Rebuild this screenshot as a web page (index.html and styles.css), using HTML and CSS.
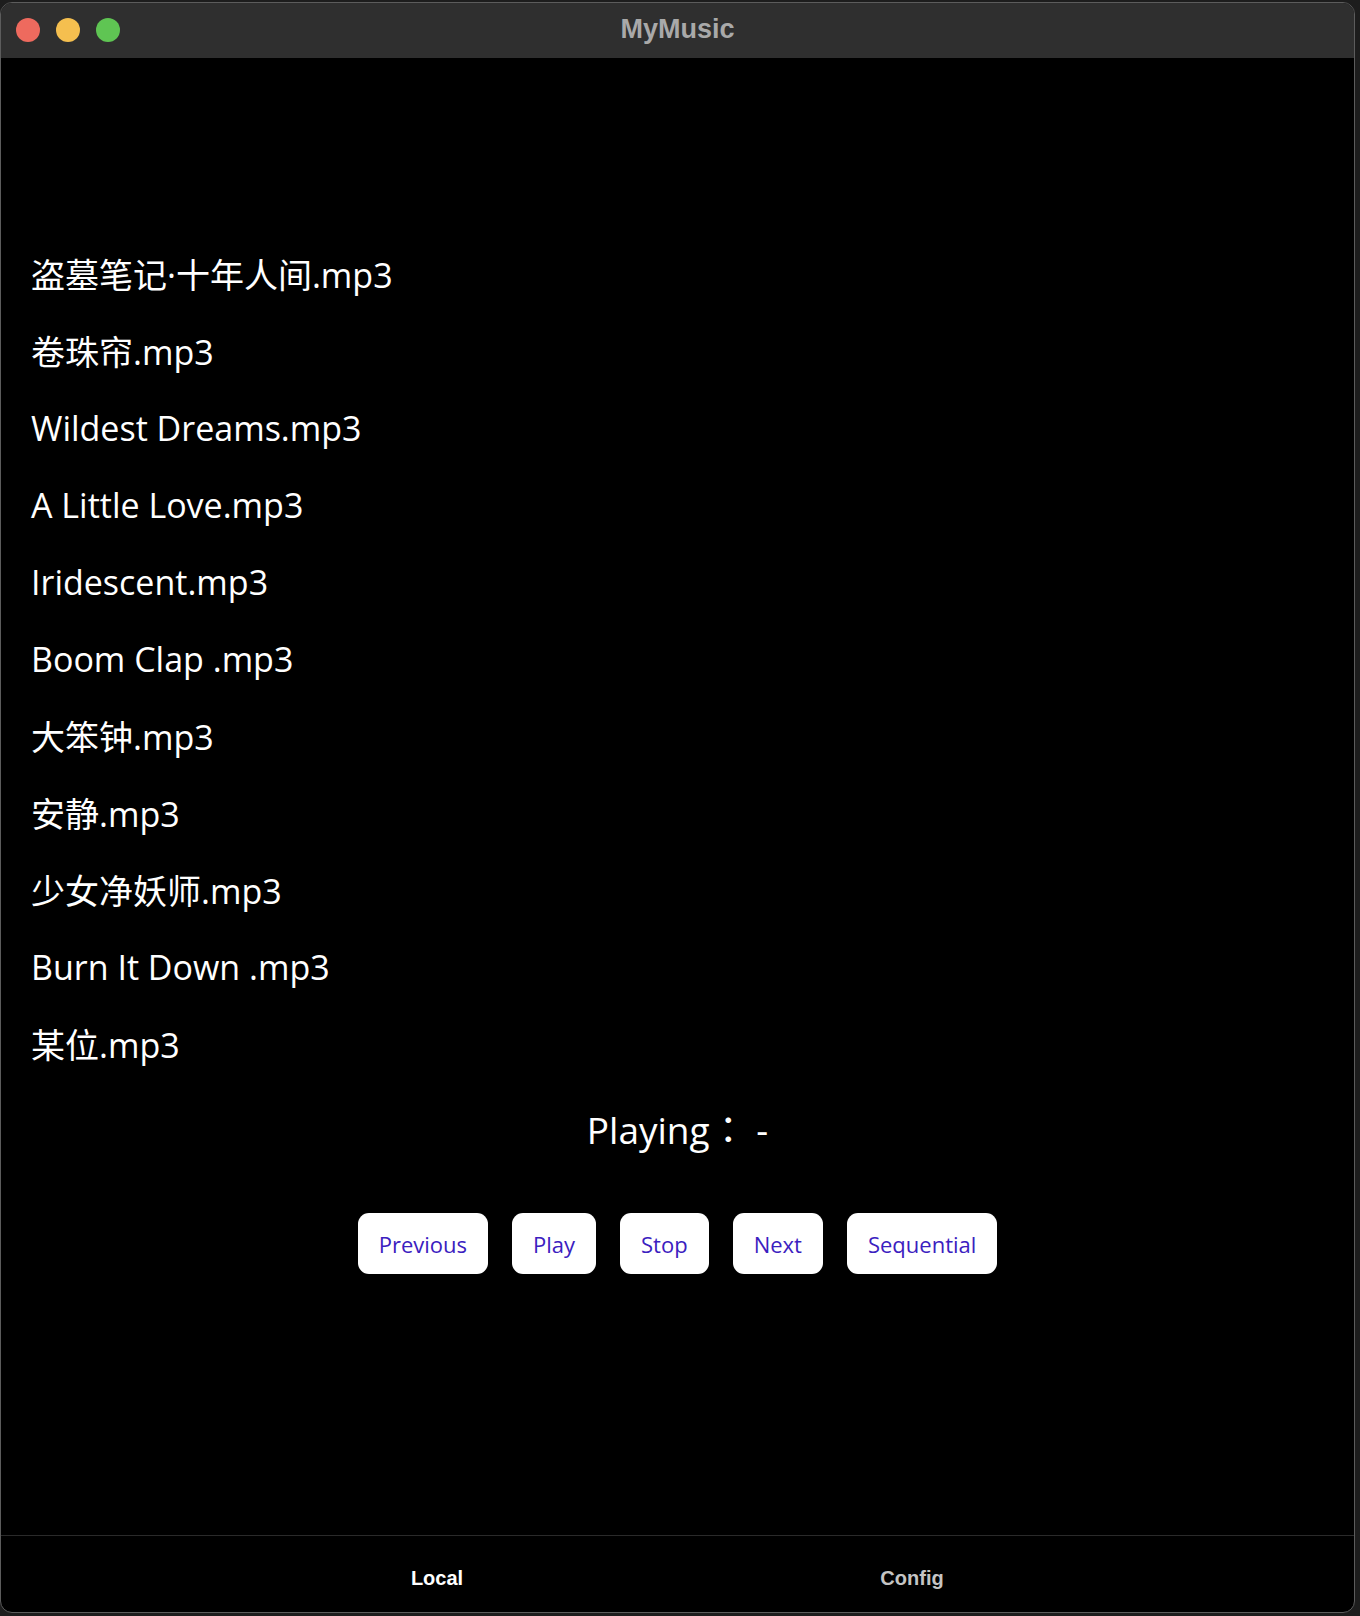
FILE: index.html
```html
<!DOCTYPE html>
<html lang="zh">
<head>
<meta charset="utf-8">
<title>MyMusic</title>
<link rel="stylesheet" href="styles.css">
</head>
<body>
<div class="window">
  <div class="titlebar">
    <div class="lights">
      <span class="light red"></span>
      <span class="light yellow"></span>
      <span class="light green"></span>
    </div>
    <div class="title">MyMusic</div>
  </div>
  <div class="content">
    <ul class="songs">
      <li>盗墓笔记·十年人间.mp3</li>
      <li>卷珠帘.mp3</li>
      <li>Wildest Dreams.mp3</li>
      <li>A Little Love.mp3</li>
      <li>Iridescent.mp3</li>
      <li>Boom Clap .mp3</li>
      <li>大笨钟.mp3</li>
      <li>安静.mp3</li>
      <li>少女净妖师.mp3</li>
      <li>Burn It Down .mp3</li>
      <li>某位.mp3</li>
    </ul>
    <div class="playing" lang="ja">Playing： -</div>
    <div class="controls">
      <button class="btn">Previous</button>
      <button class="btn">Play</button>
      <button class="btn">Stop</button>
      <button class="btn">Next</button>
      <button class="btn">Sequential</button>
    </div>
  </div>
  <div class="tabbar">
    <div class="tabs">
      <div class="tab active">Local</div>
      <div class="tab">Config</div>
    </div>
  </div>
</div>
</body>
</html>
```

FILE: styles.css
```css
html, body {
  margin: 0;
  padding: 0;
}
body {
  width: 1360px;
  height: 1616px;
  background: #1d1d1d;
  overflow: hidden;
}
.window {
  margin-top: 2px;
  width: 1355px;
  height: 1611px;
  box-sizing: border-box;
  border: 1px solid #5c5c5c;
  border-radius: 12px;
  overflow: hidden;
  background: #000;
  display: flex;
  flex-direction: column;
}
.titlebar {
  height: 55px;
  flex: none;
  background: #2f2f2f;
  position: relative;
  display: flex;
  align-items: center;
  justify-content: center;
}
.lights {
  position: absolute;
  left: 15px;
  top: 15px;
  display: flex;
  gap: 16px;
}
.light {
  width: 24px;
  height: 24px;
  border-radius: 50%;
  display: block;
}
.red { background: #ee6a5e; }
.yellow { background: #f5bf4f; }
.green { background: #5fc553; }
.title {
  font-family: "Liberation Sans", Arial, sans-serif;
  font-weight: bold;
  font-size: 27px;
  color: #a9a9a9;
  margin-top: -3px;
}
.content {
  flex: 1;
  padding-top: 177px;
  color: #fff;
  font-family: "Open Sans", "Noto Sans CJK SC", sans-serif;
}
.songs {
  list-style: none;
  margin: 0;
  padding: 0 0 0 30px;
}
.songs li {
  height: 77px;
  display: flex;
  align-items: center;
  font-size: 34px;
}
.playing {
  text-align: center;
  font-family: "Open Sans", "Noto Sans CJK JP", sans-serif;
  font-size: 37px;
  margin-top: 23px;
  line-height: 50px;
}
.controls {
  display: flex;
  justify-content: center;
  gap: 24px;
  margin-top: 58px;
}
.btn {
  height: 61px;
  padding: 0 21px;
  border: none;
  border-radius: 11px;
  background: #fff;
  color: #3b20bf;
  font-family: "Open Sans", sans-serif;
  font-size: 22px;
}
.tabbar {
  height: 76px;
  flex: none;
  border-top: 1px solid #2a2a2a;
  display: flex;
  justify-content: center;
  align-items: center;
}
.tabs {
  display: flex;
  width: 950px;
  margin-left: -6px;
  margin-top: 8px;
}
.tab {
  flex: 1;
  text-align: center;
  font-family: "Liberation Sans", Arial, sans-serif;
  font-weight: bold;
  font-size: 20px;
  color: #c4c4c4;
}
.tab.active {
  color: #fff;
}
```
